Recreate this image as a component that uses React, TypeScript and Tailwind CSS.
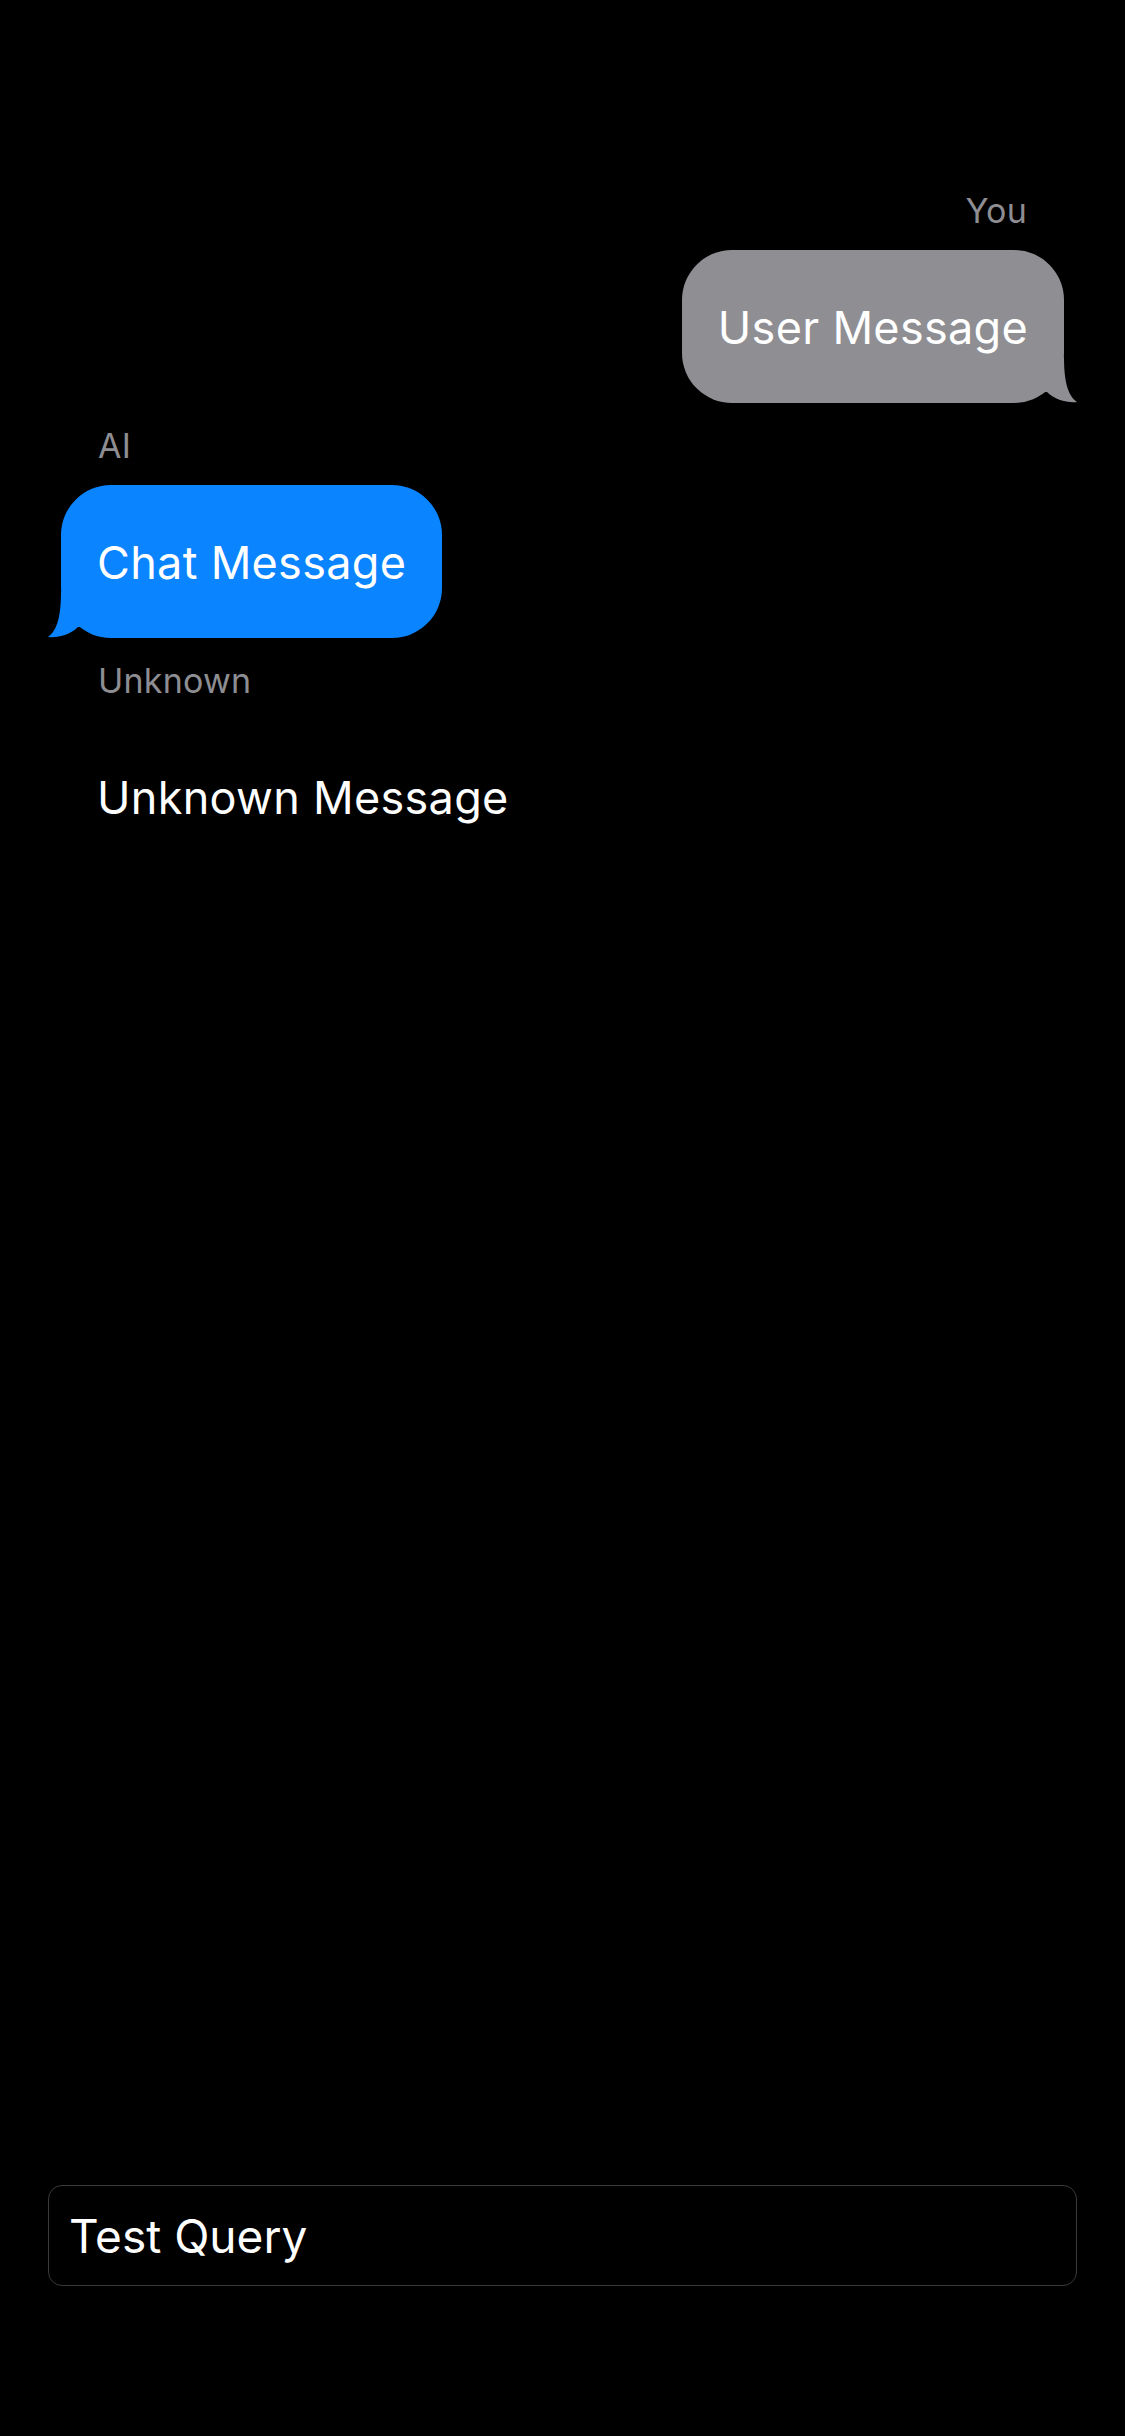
import React from 'react';

type Role = 'user' | 'ai' | 'unknown';

interface Message {
  role: Role;
  label: string;
  text: string;
}

const messages: Message[] = [
  { role: 'user', label: 'You', text: 'User Message' },
  { role: 'ai', label: 'AI', text: 'Chat Message' },
  { role: 'unknown', label: 'Unknown', text: 'Unknown Message' },
];

// iMessage style tail, drawn on the bottom corner of the bubble
const Tail = ({ side, color }: { side: 'left' | 'right'; color: string }) => (
  <svg
    width="37"
    height="46"
    viewBox="0 0 37 46"
    className={side === 'right' ? 'absolute bottom-0 right-[-13px]' : 'absolute bottom-0 left-[-13px] -scale-x-100'}
  >
    <path d="M0 0 H24 C24 22 27 38 37 45 C27 46 15 43 7 35 L0 35 Z" fill={color} />
  </svg>
);

const Bubble = ({ msg }: { msg: Message }) => {
  const isUser = msg.role === 'user';
  const isAi = msg.role === 'ai';

  return (
    <div className={`flex flex-col ${isUser ? 'items-end' : 'items-start'}`}>
      <span className="px-[37px] text-[34px] leading-[41px] tracking-[0.2px] text-[#8d8d92] mb-[19px]">{msg.label}</span>
      <div
        className={`relative rounded-[50px] px-[36px] pt-[50px] pb-[48px] text-[45px] leading-[55px] tracking-[0.3px] text-white ${
          isUser ? 'bg-[#8e8e93]' : isAi ? 'bg-[#0a84ff]' : 'bg-transparent'
        }`}
      >
        {msg.text}
        {isUser && <Tail side="right" color="#8e8e93" />}
        {isAi && <Tail side="left" color="#0a84ff" />}
      </div>
    </div>
  );
};

export default function App() {
  return (
    <div
      className="min-h-screen h-[2436px] bg-black flex flex-col"
      style={{ fontFamily: 'Inter, "Noto Sans", sans-serif' }}
    >
      <div className="flex-1 flex flex-col gap-[22px] px-[61px] pt-[190px]">
        {messages.map((m, i) => (
          <Bubble key={i} msg={m} />
        ))}
      </div>
      <div className="px-[48px] pb-[150px]">
        <input
          readOnly
          value="Test Query"
          className="w-full h-[101px] rounded-[14px] border border-[#3a3a3c] bg-black px-[20px] text-[46px] text-white outline-none"
        />
      </div>
    </div>
  );
}
